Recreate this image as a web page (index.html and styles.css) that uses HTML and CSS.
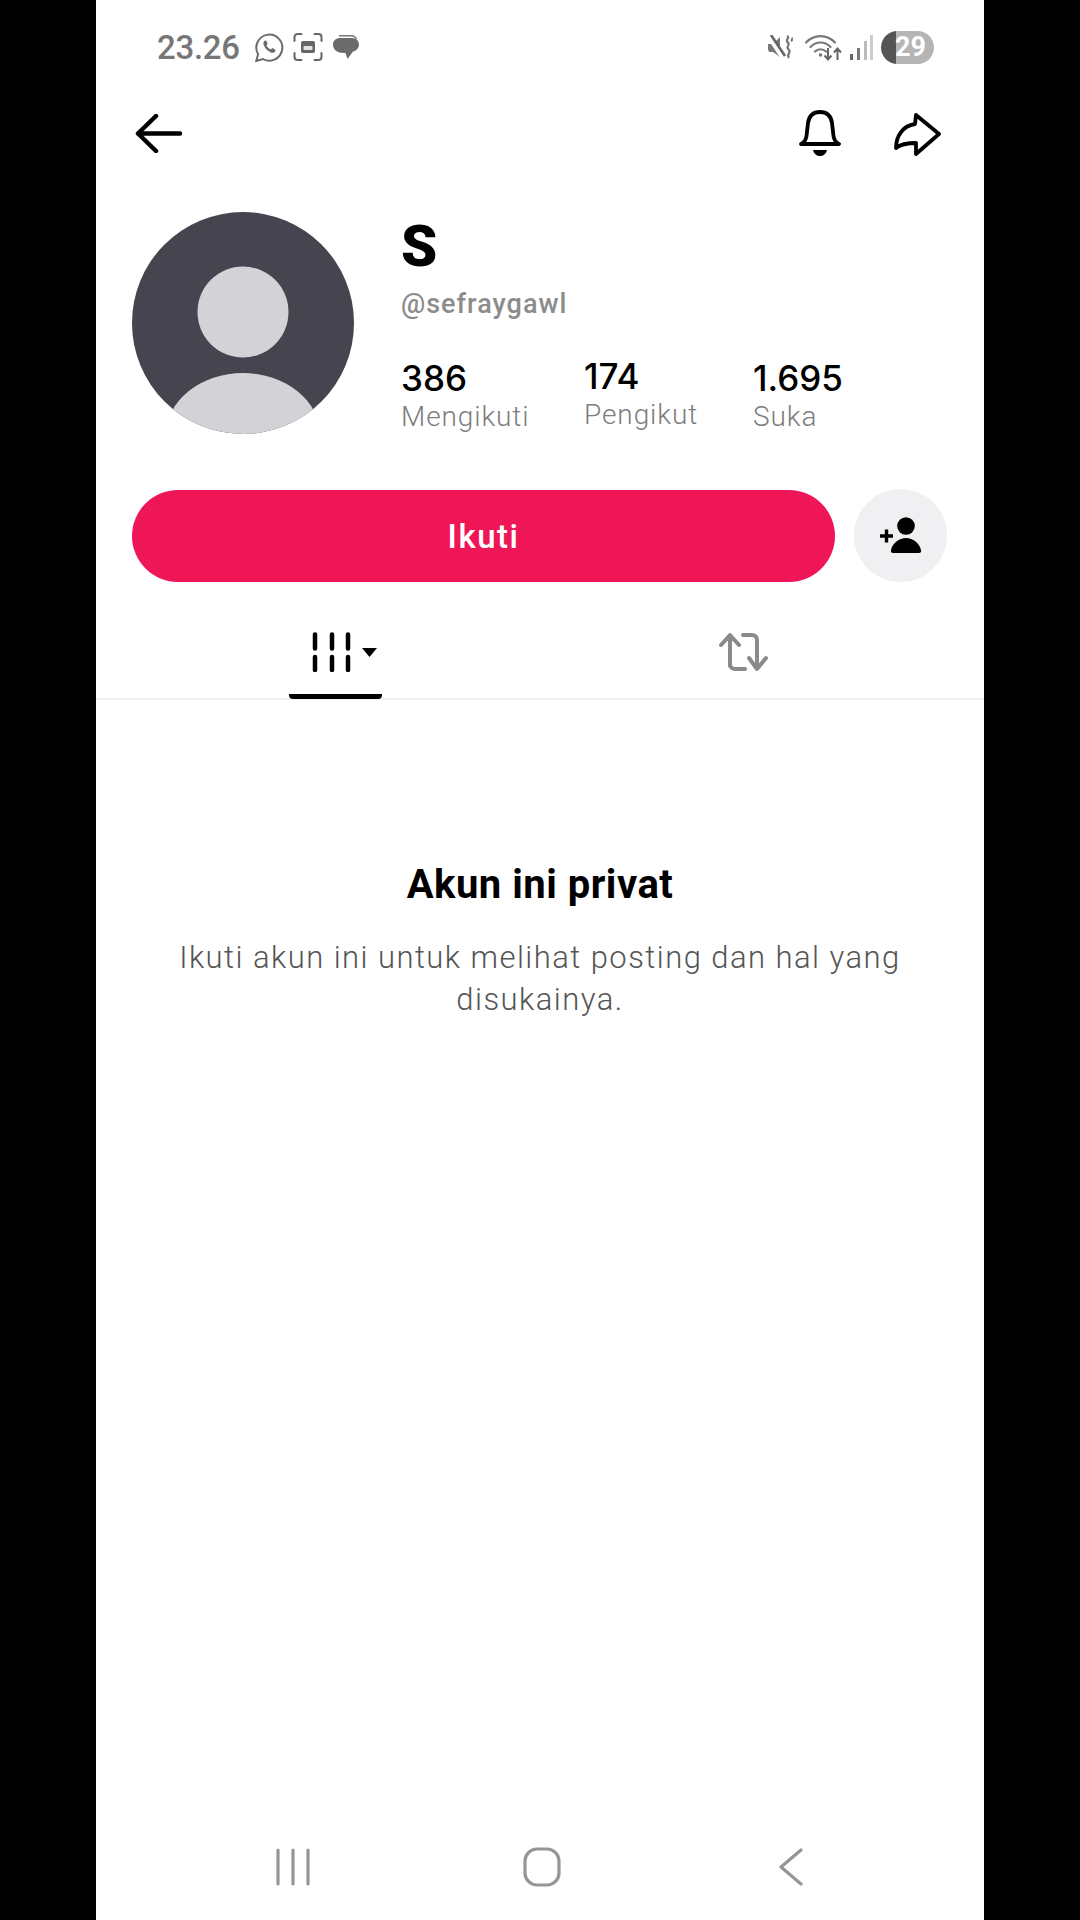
FILE: index.html
```html
<!DOCTYPE html>
<html lang="id">
<head>
<meta charset="utf-8">
<title>Profil</title>
<link rel="stylesheet" href="styles.css">
</head>
<body>
<main class="phone">
  <div class="status">
    <span class="time">23.26</span>
    <svg class="ic-wa" viewBox="0 0 29 29"><path d="M1.200 28l1.900-6.800A13 13 0 1 1 8 26l-6.800 2z" fill="none" stroke="#6b6b6b" stroke-width="2"/><path d="M10 7.500c-1.600 1-2 2.600-1.300 4.600 1.200 3.300 3.900 6.100 7.200 7.300 2.100.7 3.800.1 4.600-1.500l-.3-1.400-2.900-1.400-1.500 1.500c-2-.9-3.500-2.400-4.400-4.300l1.300-1.500-1.300-3.100z" fill="#6b6b6b"/></svg>
    <svg class="ic-shot" viewBox="0 0 30 28"><path d="M1.500 8V4a3 3 0 0 1 3-3h4M21.500 1h4a3 3 0 0 1 3 3v4M28.500 20v4a3 3 0 0 1-3 3h-4M8.500 27h-4a3 3 0 0 1-3-3v-4" fill="none" stroke="#666" stroke-width="2" stroke-linecap="round"/><rect x="8" y="8" width="14" height="12" rx="2" fill="#666"/><rect x="10.500" y="13" width="9" height="4" rx="1" fill="#e4e4e4"/></svg>
    <svg class="ic-chat" viewBox="0 0 26 24"><path d="M6 .8h12c2.500 0 4.500 1.200 5.500 3.200" fill="none" stroke="#777" stroke-width="1.400"/><path d="M7.500 3H19c4 0 7 2.800 7 6.500S23 16 20 16.500L14.500 24 12.500 18C5 18.500 0 15 0 9.800 0 5.500 3 3 7.500 3z" fill="#6b6b6b"/></svg>
    <svg class="ic-mute" viewBox="0 0 26 24"><path d="M0 9h5l7-7v20l-7-5H1.500L0 15z" fill="#777"/><path d="M1 2l14 21" stroke="#fff" stroke-width="4.500"/><path d="M3 0l14 21" stroke="#666" stroke-width="2.600"/><path d="M19 1c3.500 2-2.500 4 .8 6.500s-2.800 4 .8 7-2.800 4 .4 8.500M23.500 3c1.500 1-.5 2 .5 3.500" fill="none" stroke="#777" stroke-width="2.200"/></svg>
    <svg class="ic-wifi" viewBox="0 0 37 28"><path d="M1 9.500C9 1 22 1 30 9.500M5.500 14C11 8 20 8 25.500 14M10 18.500c3-3 8-3 11 0" fill="none" stroke="#777" stroke-width="2.200" stroke-linecap="round"/><circle cx="15.500" cy="22" r="1.800" fill="#777"/><path d="M23 15v11m-3.500-3.500L23 26.500l3.500-4M32.500 27V16m-3.500 3.500l3.500-4 3.500 4" fill="none" stroke="#666" stroke-width="2"/></svg>
    <svg class="ic-signal" viewBox="0 0 23 25"><rect x="0" y="19" width="3" height="6" fill="#666"/><rect x="7" y="13" width="3" height="12" fill="#777"/><rect x="14" y="6" width="3" height="19" fill="#bbb"/><rect x="20" y="0" width="3" height="25" fill="#ccc"/></svg>
    <div class="battery"><span class="battery-num">29</span></div>
  </div>

  <div class="topbar">
    <svg class="ic-back" viewBox="0 0 48 39"><path d="M3 19.500h42M21 2L3 19.500 21 37" fill="none" stroke="#000" stroke-width="4.500" stroke-linecap="round" stroke-linejoin="round"/></svg>
    <div class="top-actions">
      <svg class="ic-bell" viewBox="0 0 42 47"><path d="M2 34c4-2 5-4 5.500-8L9 13C10 6 14 2 21 2s11 4 12 11l1.500 13c.5 4 1.500 6 5.500 8z" fill="none" stroke="#000" stroke-width="3.800" stroke-linejoin="round"/><path d="M14 40h14c-1 4-3.500 6-7 6s-6-2-7-6z" fill="#000"/></svg>
      <svg class="ic-share" viewBox="0 0 48 44"><path d="M23 3L46 22 23 42V31C14 31 8 32 3 36 3 25 9 14 22 12z" fill="none" stroke="#000" stroke-width="3.800" stroke-linejoin="round"/></svg>
    </div>
  </div>

  <section class="profile">
    <svg class="avatar" viewBox="0 0 222 222"><defs><clipPath id="av"><circle cx="111" cy="111" r="111"/></clipPath></defs><g clip-path="url(#av)"><rect width="222" height="222" fill="#46454f"/><circle cx="111" cy="100" r="45.500" fill="#d3d3d7"/><ellipse cx="111" cy="223" rx="77" ry="62" fill="#d3d3d7"/></g></svg>
    <div class="info">
      <h1 class="name">S</h1>
      <p class="handle">@sefraygawl</p>
      <div class="stats">
        <div class="stat stat-following"><span class="num">386</span><span class="label">Mengikuti</span></div>
        <div class="stat stat-followers"><span class="num">174</span><span class="label">Pengikut</span></div>
        <div class="stat"><span class="num">1.695</span><span class="label">Suka</span></div>
      </div>
    </div>
  </section>

  <div class="actions">
    <button class="follow">Ikuti</button>
    <div class="add">
      <svg class="ic-add" viewBox="0 0 42 37"><path d="M0 19h13M6.500 12.500v13" stroke="#000" stroke-width="3.400"/><circle cx="26" cy="9" r="8.800" fill="#000"/><path d="M13 36c-1.500 0-2.500-1-2-3 1.500-7 8-12 15-12s13.500 5 15 12c.5 2-.5 3-2 3z" fill="#000"/></svg>
    </div>
  </div>

  <nav class="tabs">
    <div class="tab tab-videos">
      <svg class="ic-grid" viewBox="0 0 66 40"><g fill="none" stroke="#000" stroke-width="4.500" stroke-linecap="round"><path d="M3 2.500v14M20 2.500v14M36 2.500v14M3 25v13M20 25v13M36 25v13"/></g><path d="M50 16h15l-7.500 9z" fill="#000"/></svg>
    </div>
    <div class="tab tab-repost">
      <svg class="ic-repost" viewBox="0 0 50 40"><path d="M11 34V5M2 13l9-10 9 10M26 37H16c-3 0-5-2-5-5M24 3h9c3 0 5 2 5 5v27M30 26l8 11 9-11" fill="none" stroke="#8a8a8a" stroke-width="4" stroke-linecap="round" stroke-linejoin="round"/></svg>
    </div>
  </nav>

  <section class="private">
    <h2 class="private-title">Akun ini privat</h2>
    <p class="private-text">Ikuti akun ini untuk melihat posting dan hal yang disukainya.</p>
  </section>

  <div class="navbar">
    <svg class="ic-recent" viewBox="0 0 36 38"><path d="M3 2v34M18 2v34M33 2v34" stroke="#969696" stroke-width="3.200" stroke-linecap="round"/></svg>
    <svg class="ic-home" viewBox="0 0 38 40"><rect x="2" y="2" width="34" height="36" rx="12" fill="none" stroke="#969696" stroke-width="3.200"/></svg>
    <svg class="ic-navback" viewBox="0 0 26 38"><path d="M23 2L3 19 23 36" fill="none" stroke="#969696" stroke-width="3.200" stroke-linecap="round" stroke-linejoin="round"/></svg>
  </div>
</main>
</body>
</html>
```

FILE: styles.css
```css
* { box-sizing: border-box; }
html, body { margin: 0; padding: 0; background: #000; }
body { width: 1080px; height: 1920px; overflow: hidden; font-family: Roboto, "Liberation Sans", sans-serif; }
svg { display: block; flex: none; }

.phone {
  width: 888px; height: 1920px; margin: 0 auto; background: #fff;
  display: flex; flex-direction: column;
}

.status { display: flex; align-items: center; height: 34px; margin-top: 30px; padding-left: 61px; padding-right: 50px; }
.time { font-size: 33px; font-weight: 500; color: #777; line-height: 34px; width: 98px; padding-top: 2px; letter-spacing: -.3px; }
.ic-wa { width: 29px; height: 29px; }
.ic-shot { width: 30px; height: 28px; margin-left: 9px; }
.ic-chat { width: 26px; height: 24px; margin-left: 10px; margin-right: auto; }
.ic-mute { width: 26px; height: 24px; }
.ic-wifi { width: 37px; height: 28px; margin-left: 11px; }
.ic-signal { width: 23px; height: 25px; margin-left: 8px; }
.battery {
  width: 53px; height: 33px; margin-left: 8px; border-radius: 17px;
  background: linear-gradient(90deg, #555 0 15px, #b5b5b5 15px);
  display: flex; align-items: center; justify-content: flex-end; padding-right: 8px;
}
.battery-num { font-size: 27px; font-weight: 700; color: #fff; line-height: 1; }

.topbar { display: flex; justify-content: space-between; align-items: center; margin-top: 46px; height: 47px; padding-left: 39px; padding-right: 43px; }
.ic-back { width: 48px; height: 39px; }
.top-actions { display: flex; align-items: center; gap: 52px; }
.ic-bell { width: 42px; height: 47px; }
.ic-share { width: 48px; height: 44px; }

.profile { display: flex; margin-top: 55px; padding-left: 36px; gap: 47px; }
.avatar { width: 222px; height: 222px; }
.info { display: flex; flex-direction: column; }
.name { margin: 6px 0 0; font-size: 58px; font-weight: 900; line-height: 56px; color: #000; }
.handle { margin: 15px 0 0; font-size: 27px; font-weight: 500; line-height: 30px; letter-spacing: 1px; color: #8c8c8c; }
.stats { display: flex; margin-top: 39px; }
.stat { display: flex; flex-direction: column; }
.stat-following { width: 183px; }
.stat-followers { width: 169px; margin-top: -2px; }
.num { font-family: Inter, Roboto, sans-serif; font-size: 35px; font-weight: 500; line-height: 41px; color: #000; }
.label { font-size: 28px; font-weight: 300; line-height: 36px; letter-spacing: .9px; color: #7d7d7d; }

.actions { display: flex; align-items: center; margin-top: 54px; padding-left: 36px; gap: 19px; }
.follow {
  width: 703px; height: 92px; border: 0; border-radius: 46px; background: #ef1657; padding-top: 3px;
  color: #fff; font-family: Roboto, sans-serif; font-size: 33px; font-weight: 500; letter-spacing: 1.5px;
}
.add { width: 93px; height: 93px; border-radius: 50%; background: #f0f0f2; display: flex; align-items: center; justify-content: center; }
.ic-add { width: 42px; height: 37px; }

.tabs { display: flex; height: 74px; margin-top: 44px; border-bottom: 2px solid #f0f0f0; }
.tab { display: flex; flex-direction: column; }
.tab-videos { width: 93px; margin-left: 193px; align-items: flex-start; height: 73px; border-bottom: 5px solid #000; border-radius: 0 0 4px 4px; padding-left: 23px; padding-top: 6px; }
.tab-repost { margin-left: 337px; padding-top: 6px; }
.ic-grid { width: 66px; height: 40px; }
.ic-repost { width: 50px; height: 40px; }

.private { display: flex; flex-direction: column; align-items: center; text-align: center; margin-top: 161px; }
.private-title { margin: 0; font-size: 40px; font-weight: 700; line-height: 48px; letter-spacing: .5px; color: #000; }
.private-text { margin: 28px 0 0; width: 760px; font-size: 31px; font-weight: 300; line-height: 42px; letter-spacing: 1.45px; color: #555; }

.navbar { display: flex; align-items: center; margin-top: auto; padding-left: 179px; padding-bottom: 33px; }
.ic-recent { width: 36px; height: 38px; }
.ic-home { width: 38px; height: 40px; margin-left: 212px; }
.ic-navback { width: 26px; height: 38px; margin-left: 217px; }
```
